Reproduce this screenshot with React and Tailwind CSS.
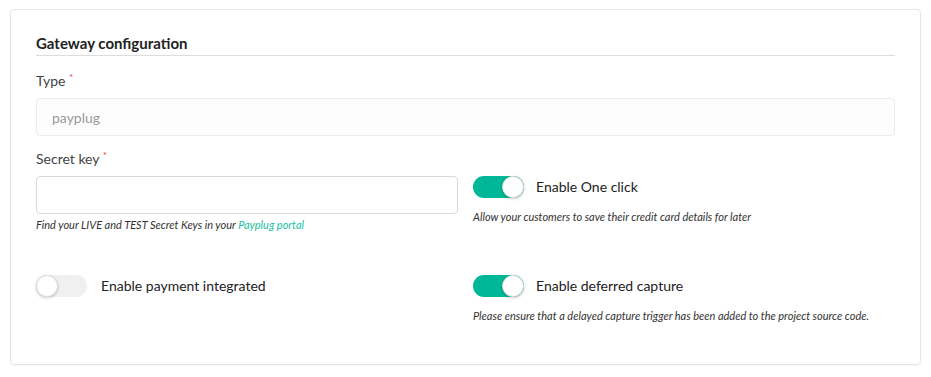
import React from 'react'

function Toggle({ on }) {
  return (
    <div className={`relative w-[51px] h-[22px] rounded-full flex-shrink-0 ${on ? 'bg-[#00b897]' : 'bg-[#f0f0f0]'}`}>
      <div className={`absolute top-0 w-[22px] h-[22px] rounded-full bg-white border border-[#ddd] shadow-[0_1px_3px_rgba(0,0,0,0.2)] ${on ? 'right-0' : 'left-0'}`} />
    </div>
  )
}

export default function App() {
  return (
    <div className="w-[931px] h-[377px] bg-white pt-[9px] pl-[10px] font-['Lato','Open_Sans',sans-serif] text-[#333]">
      <div className="w-[911px] h-[356px] border border-[#e6e6e6] rounded-[4px] shadow-[0_1px_2px_rgba(0,0,0,0.04)] px-[25px] pt-[23px]">
        {/* Heading */}
        <div className="border-b border-[#ddd] pb-[2px]">
          <h2 className="text-[15px] leading-[20px] font-bold text-[#222]">Gateway configuration</h2>
        </div>

        {/* Type */}
        <label className="block mt-[15px] text-[14px] leading-[20px] text-[#444]">
          Type <sup className="text-[#e53e3e] text-[10px]">*</sup>
        </label>
        <div className="mt-[7px] h-[38px] rounded-[4px] border border-[#ececec] bg-[#fdfdfd] flex items-center px-[15px] text-[14px] text-[#999]">
          payplug
        </div>

        <div className="grid grid-cols-2 gap-x-[15px]">
          {/* Secret key */}
          <div>
            <label className="block mt-[13px] text-[14px] leading-[20px] text-[#444]">
              Secret key <sup className="text-[#e53e3e] text-[10px]">*</sup>
            </label>
            <div className="mt-[7px] h-[38px] rounded-[4px] border border-[#d9d9d9] bg-white" />
            <p className="mt-[3px] text-[11px] leading-[16px] italic text-[#333]">
              Find your LIVE and TEST Secret Keys in your <span className="text-[#1bbf9f]">Payplug portal</span>
            </p>
          </div>

          {/* One click */}
          <div className="pt-[40px]">
            <div className="flex items-center">
              <Toggle on />
              <span className="ml-[12px] text-[14px] leading-[22px] text-[#222]">Enable One click</span>
            </div>
            <p className="mt-[11px] text-[11px] leading-[16px] italic text-[#333]">
              Allow your customers to save their credit card details for later
            </p>
          </div>

          {/* Payment integrated */}
          <div className="pt-[42px]">
            <div className="flex items-center">
              <Toggle />
              <span className="ml-[14px] text-[14px] leading-[22px] text-[#222]">Enable payment integrated</span>
            </div>
          </div>

          {/* Deferred capture */}
          <div className="pt-[42px]">
            <div className="flex items-center">
              <Toggle on />
              <span className="ml-[12px] text-[14px] leading-[22px] text-[#222]">Enable deferred capture</span>
            </div>
            <p className="mt-[11px] text-[11px] leading-[16px] italic text-[#333]">
              Please ensure that a delayed capture trigger has been added to the project source code.
            </p>
          </div>
        </div>
      </div>
    </div>
  )
}
